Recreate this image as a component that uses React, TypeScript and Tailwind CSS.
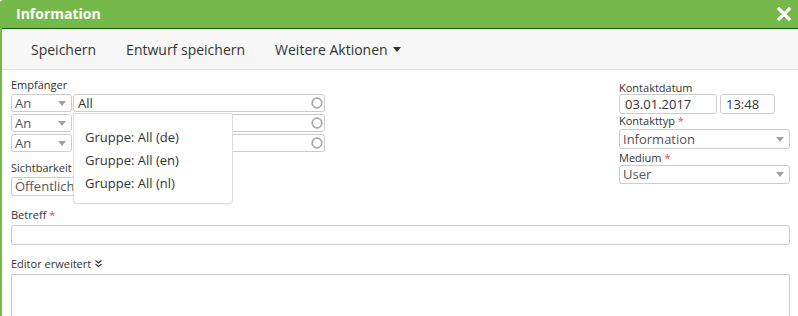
import React from "react";

const font = { fontFamily: '"Open Sans", "Noto Sans", sans-serif' };

function Caret() {
  return (
    <svg width="8" height="5" viewBox="0 0 8 5" className="shrink-0">
      <path d="M0 0 L8 0 L4 5 Z" fill="#a0a0a0" />
    </svg>
  );
}

function Ring() {
  return (
    <svg width="12" height="12" viewBox="0 0 12 12" className="shrink-0">
      <circle cx="6" cy="6" r="4.8" fill="none" stroke="#aaa" strokeWidth="1.8" />
    </svg>
  );
}

function SelectBox({ value, className }: { value: string; className: string }) {
  return (
    <div
      className={`flex items-center justify-between border border-[#ccc] rounded-[3px] bg-white pl-[3px] pr-[5px] text-[13px] text-[#555] leading-none ${className}`}
    >
      <span>{value}</span>
      <Caret />
    </div>
  );
}

function RecipientRow({ value }: { value: string }) {
  return (
    <div className="flex h-[18px] gap-px">
      <SelectBox value="An" className="w-[61px] h-full" />
      <div className="flex-1 flex items-center justify-between border border-[#ccc] rounded-[3px] bg-white pl-[4px] pr-[1px] text-[13px] text-[#333] leading-none">
        <span>{value}</span>
        <Ring />
      </div>
    </div>
  );
}

export default function App() {
  return (
    <div className="w-[798px] h-[316px] overflow-hidden bg-white border-l-2 border-[#76b94b] rounded-tl-[3px] text-[#333]" style={font}>
      <div className="h-[29px] bg-[#76b94b] border-b border-[#165c00] flex items-center justify-between pl-[14px] pr-[7px]">
        <span className="text-white font-bold text-[14px] leading-none">Information</span>
        <svg width="14" height="14" viewBox="0 0 14 14">
          <path d="M2 2 L12 12 M12 2 L2 12" stroke="white" strokeWidth="3.2" strokeLinecap="square" />
        </svg>
      </div>
      <div className="h-[41px] bg-[#f7f7f7] border-b border-[#e3e3e3] flex items-center pl-[29px] text-[14px] text-[#333] gap-[30px]">
        <span>Speichern</span>
        <span>Entwurf speichern</span>
        <span className="flex items-center gap-[5px]">
          Weitere Aktionen
          <svg width="8" height="5" viewBox="0 0 8 5">
            <path d="M0 0 L8 0 L4 5 Z" fill="#333" />
          </svg>
        </span>
      </div>
      <div className="pl-[9px] pr-[8px] pt-[8px]">
        <div className="flex justify-between">
          <div className="w-[314px] relative">
            <div className="text-[11px] leading-[14px] h-[16px]">Empfänger</div>
            <div className="flex flex-col gap-[2px]">
              <RecipientRow value="All" />
              <RecipientRow value="" />
              <RecipientRow value="" />
            </div>
            <div className="text-[11px] leading-[14px] mt-[9px]">Sichtbarkeit</div>
            <SelectBox value="Öffentlich" className="w-[140px] h-[19px] mt-[2px]" />
            <div className="absolute left-[62px] top-[35px] w-[160px] h-[91px] bg-white border border-[#ddd] rounded-b-[4px] shadow-[0_1px_2px_rgba(0,0,0,0.05)] pt-[15px] pl-[11px] flex flex-col gap-[7px] text-[13px] leading-[16px] text-[#333]">
              <span>Gruppe: All (de)</span>
              <span>Gruppe: All (en)</span>
              <span>Gruppe: All (nl)</span>
            </div>
          </div>
          <div className="w-[171px] pt-[3px]">
            <div className="text-[11px] leading-[13px]">Kontaktdatum</div>
            <div className="flex gap-[3px]">
              <div className="w-[98px] h-[20px] border border-[#ccc] rounded-[3px] flex items-center pl-[5px] text-[13px] leading-none">03.01.2017</div>
              <div className="w-[55px] h-[20px] border border-[#ccc] rounded-[3px] flex items-center pl-[5px] text-[13px] leading-none">13:48</div>
            </div>
            <div className="text-[11px] leading-[13px]">
              Kontakttyp <span className="text-[#e05050]">*</span>
            </div>
            <SelectBox value="Information" className="w-full h-[20px] mt-[2px]" />
            <div className="text-[11px] leading-[13px] mt-[2px]">
              Medium <span className="text-[#e05050]">*</span>
            </div>
            <SelectBox value="User" className="w-full h-[19px] mt-px" />
          </div>
        </div>
        <div className="text-[11px] leading-[14px] mt-[12px]">
          Betreff <span className="text-[#e05050]">*</span>
        </div>
        <div className="h-[20px] border border-[#ccc] rounded-[3px] mt-[3px]" />
        <div className="text-[11px] leading-[14px] mt-[12px] flex items-center gap-[4px]">
          Editor erweitert
          <svg width="7" height="8" viewBox="0 0 7 8">
            <path d="M0.5 0.5 L3.5 3 L6.5 0.5 M0.5 4 L3.5 6.5 L6.5 4" fill="none" stroke="#333" strokeWidth="1.1" />
          </svg>
        </div>
        <div className="h-[60px] border border-[#ccc] mt-[3px]" />
      </div>
    </div>
  );
}
